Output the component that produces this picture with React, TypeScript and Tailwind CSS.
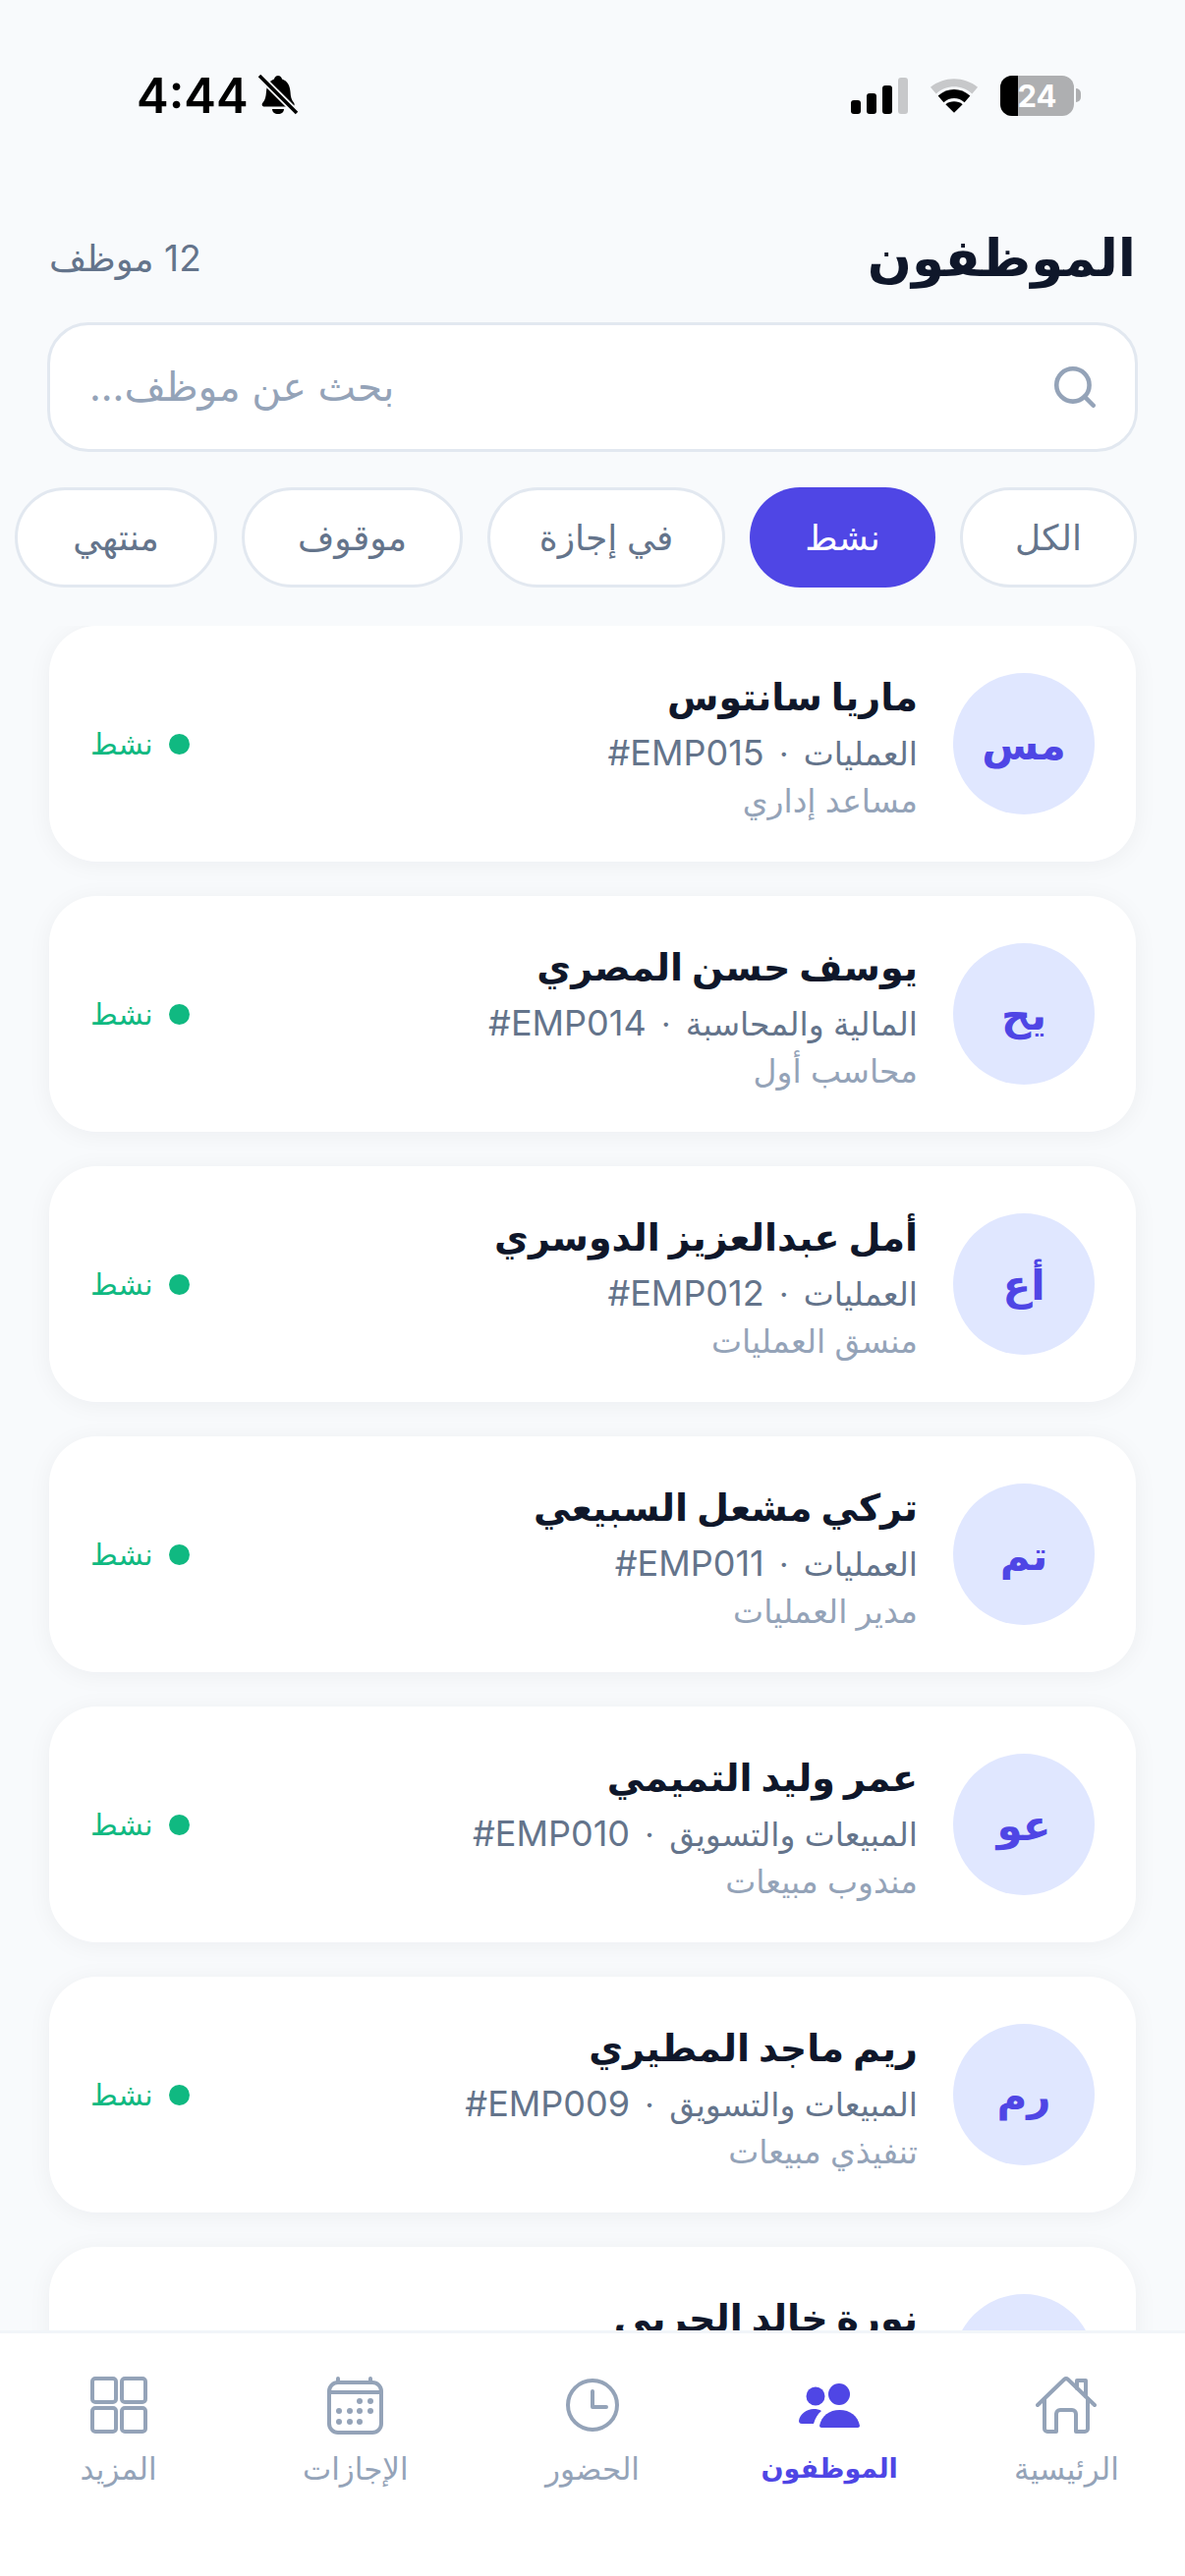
import { Search } from 'lucide-react';

const employees = [
  { initials: 'مس', name: 'ماريا سانتوس', dept: 'العمليات', code: '#EMP015', role: 'مساعد إداري' },
  { initials: 'يح', name: 'يوسف حسن المصري', dept: 'المالية والمحاسبة', code: '#EMP014', role: 'محاسب أول' },
  { initials: 'أع', name: 'أمل عبدالعزيز الدوسري', dept: 'العمليات', code: '#EMP012', role: 'منسق العمليات' },
  { initials: 'تم', name: 'تركي مشعل السبيعي', dept: 'العمليات', code: '#EMP011', role: 'مدير العمليات' },
  { initials: 'عو', name: 'عمر وليد التميمي', dept: 'المبيعات والتسويق', code: '#EMP010', role: 'مندوب مبيعات' },
  { initials: 'رم', name: 'ريم ماجد المطيري', dept: 'المبيعات والتسويق', code: '#EMP009', role: 'تنفيذي مبيعات' },
  { initials: 'نخ', name: 'نورة خالد الحربي', dept: 'الموارد البشرية', code: '#EMP008', role: 'أخصائي موارد بشرية' },
];

const filters = [
  { label: 'الكل', width: 'w-[180px]' },
  { label: 'نشط', width: 'w-[189px]', active: true },
  { label: 'في إجازة', width: 'w-[242px]' },
  { label: 'موقوف', width: 'w-[225px]' },
  { label: 'منتهي', width: 'w-[206px]' },
];

function StatusBar() {
  return (
    <div dir="ltr" className="flex h-[164px] shrink-0 items-center justify-between pl-[139px] pr-[106px] pt-[30px]">
      <div className="flex items-center gap-[9px]">
        <span className="text-[49px] font-semibold leading-none text-black">4:44</span>
        <svg width="42" height="42" viewBox="0 0 42 42">
          <path d="M21 1c2 0 3.500 1.500 4 3.500 6 2 8 7 8.500 13 .3 5 1 8 3.500 11 1 1.500 1 4-1.500 4H7c-2.500 0-3-2.500-1.500-4 2.500-3 3-6 3.500-11C9.500 11.500 11.500 6.500 17 4.500 17.500 2.500 19 1 21 1z" fill="#000" />
          <path d="M15 35h12c0 3-2.500 5-6 5s-6-2-6-5z" fill="#000" />
          <path d="M2 1l38 38" stroke="#f8fafc" strokeWidth="7" />
          <path d="M2 1l38 38" stroke="#000" strokeWidth="3.500" />
        </svg>
      </div>
      <div className="flex items-center gap-[22px]">
        <div className="flex items-end gap-[6px]">
          <div className="h-[14px] w-[10px] rounded-[3px] bg-black" />
          <div className="h-[21px] w-[10px] rounded-[3px] bg-black" />
          <div className="h-[29px] w-[10px] rounded-[3px] bg-black" />
          <div className="h-[37px] w-[10px] rounded-[3px] bg-[#c7c8ca]" />
        </div>
        <svg width="50" height="37" viewBox="0 0 52 38">
          <path d="M1 10C15-2 37-2 51 10l-6 7C34 7 18 7 7 17z" fill="#c7c8ca" />
          <path d="M9 19c10-9 24-9 34 0l-6 7c-6-6-16-6-22 0z" fill="#000" />
          <path d="M17 28c5-4 13-4 18 0l-9 9z" fill="#000" />
        </svg>
        <div className="flex items-center gap-[2px]">
          <div className="relative flex h-[41px] w-[75px] items-center justify-center overflow-hidden rounded-[12px] bg-[#aeafb1]">
            <div className="absolute inset-y-0 left-0 w-[18px] bg-black" />
            <span className="relative text-[31px] font-bold leading-none text-white">24</span>
          </div>
          <div className="h-[14px] w-[5px] rounded-r-full bg-[#aeafb1]" />
        </div>
      </div>
    </div>
  );
}

function EmployeeCard({ employee }: { employee: (typeof employees)[number] }) {
  return (
    <div className="flex h-[240px] shrink-0 items-center gap-[36px] rounded-[48px] bg-white px-[42px] shadow-[0_3px_24px_rgba(15,23,42,0.05)]">
      <div className="flex h-[144px] w-[144px] shrink-0 items-center justify-center rounded-full bg-[#e0e7ff] text-[42px] font-bold text-[#4f46e5]">
        {employee.initials}
      </div>
      <div className="min-w-0 flex-1 pt-[7px]">
        <div className="text-[38px] font-bold leading-[54px] text-[#0f172a]">{employee.name}</div>
        <div className="mt-[6px] text-[33px] leading-[48px] text-[#64748b]">
          {employee.dept}
          <span className="mx-[6px]"> · </span>
          <bdi className="text-[36px]">{employee.code}</bdi>
        </div>
        <div className="text-[33px] leading-[48px] text-[#94a3b8]">{employee.role}</div>
      </div>
      <div className="flex items-center gap-[16px]">
        <div className="h-[21px] w-[21px] rounded-full bg-[#10b981]" />
        <span className="text-[30px] font-medium text-[#10b981]">نشط</span>
      </div>
    </div>
  );
}

function NavIcon({ name }: { name: string }) {
  if (name === 'home') {
    return (
      <svg width="62" height="58" viewBox="0 0 62 58" fill="none" stroke="#94a3b8" strokeWidth="4" strokeLinejoin="round" strokeLinecap="round">
        <path d="M2 29 29 3a3 3 0 0 1 4 0l27 26" />
        <path d="M9 23v30a3 3 0 0 0 3 3h9V38a4 4 0 0 1 4-4h12a4 4 0 0 1 4 4v18h9a3 3 0 0 0 3-3V23" />
        <path d="M42 12V4h9v16" />
      </svg>
    );
  }
  if (name === 'users') {
    return (
      <svg width="62" height="45" viewBox="0 0 62 45" fill="#4f46e5">
        <circle cx="17" cy="13" r="9.500" />
        <circle cx="41" cy="11" r="11" />
        <path d="M0 38c1-7 8-12 15-12 3 0 6 .5 8 2-4 3-6 7-8 13H3c-2 0-3-1-3-3z" />
        <path d="M21 43c2-10 10-16 20.500-16S60 33 62 43c0 1-1 2-2 2H23c-1 0-2-1-2-2z" />
      </svg>
    );
  }
  if (name === 'clock') {
    return (
      <svg width="54" height="54" viewBox="0 0 54 54" fill="none" stroke="#94a3b8" strokeWidth="4" strokeLinecap="round" strokeLinejoin="round">
        <circle cx="27" cy="27" r="25" />
        <path d="M27 13v16h14" />
      </svg>
    );
  }
  if (name === 'calendar') {
    return (
      <svg width="57" height="59" viewBox="0 0 57 59" fill="none" stroke="#94a3b8" strokeWidth="4" strokeLinecap="round">
        <rect x="2" y="6" width="53" height="51" rx="9" />
        <path d="M2 16h53M11 2v4M44 2v4" />
        <g fill="#94a3b8" stroke="none">
          <circle cx="33" cy="25" r="3" /><circle cx="44" cy="25" r="3" />
          <circle cx="12" cy="35" r="3" /><circle cx="23" cy="35" r="3" /><circle cx="33" cy="35" r="3" /><circle cx="44" cy="35" r="3" />
          <circle cx="12" cy="46" r="3" /><circle cx="23" cy="46" r="3" /><circle cx="33" cy="46" r="3" />
        </g>
      </svg>
    );
  }
  return (
    <svg width="58" height="58" viewBox="0 0 58 58" fill="none" stroke="#94a3b8" strokeWidth="4">
      <rect x="2" y="2" width="24" height="24" rx="3" />
      <rect x="32" y="2" width="24" height="24" rx="3" />
      <rect x="2" y="32" width="24" height="24" rx="3" />
      <rect x="32" y="32" width="24" height="24" rx="3" />
    </svg>
  );
}

const navItems = [
  { label: 'الرئيسية', icon: 'home' },
  { label: 'الموظفون', icon: 'users', active: true },
  { label: 'الحضور', icon: 'clock' },
  { label: 'الإجازات', icon: 'calendar' },
  { label: 'المزيد', icon: 'grid' },
];

export default function App() {
  return (
    <div
      dir="rtl"
      className="flex h-[2622px] w-[1206px] flex-col overflow-hidden bg-[#f8fafc]"
      style={{ fontFamily: '"Inter", "DejaVu Sans", sans-serif' }}
    >
      <StatusBar />

      {/* Header */}
      <div className="flex h-[164px] shrink-0 items-center justify-between px-[50px] pt-[34px]">
        <h1 className="text-[53px] font-bold text-[#0f172a]">الموظفون</h1>
        <span className="text-[37px] text-[#64748b]">12 موظف</span>
      </div>

      {/* Search */}
      <div className="mx-[48px] flex h-[132px] shrink-0 items-center justify-between rounded-[42px] border-[3px] border-[#e2e8f0] bg-white pl-[40px] pr-[36px]">
        <Search size={50} color="#94a3b8" strokeWidth={2.2} />
        <span className="text-[41px] text-[#94a3b8]">بحث عن موظف...</span>
      </div>

      {/* Filters */}
      <div className="mt-[36px] flex shrink-0 gap-[25px] pr-[49px]">
        {filters.map((f) => (
          <div
            key={f.label}
            className={`flex h-[102px] shrink-0 items-center justify-center rounded-full text-[36px] ${f.width} ${
              f.active ? 'bg-[#4f46e5] font-medium text-white' : 'border-[3px] border-[#e2e8f0] bg-white font-medium text-[#64748b]'
            }`}
          >
            {f.label}
          </div>
        ))}
      </div>

      {/* List */}
      <div className="mt-[39px] flex min-h-0 flex-1 flex-col gap-[35px] overflow-hidden px-[50px]">
        {employees.map((e) => (
          <EmployeeCard key={e.code} employee={e} />
        ))}
      </div>

      {/* Bottom nav */}
      <div className="flex h-[250px] shrink-0 items-start border-t-[3px] border-[#f1f5f9] bg-white pt-[42px]">
        {navItems.map((item) => (
          <div key={item.label} className="flex flex-1 flex-col items-center">
            <div className="flex h-[62px] items-center justify-center">
              <NavIcon name={item.icon} />
            </div>
            <span className={`mt-[11px] leading-[46px] ${item.active ? 'text-[27px] font-semibold text-[#4f46e5]' : 'text-[31px] font-medium text-[#94a3b8]'}`}>
              {item.label}
            </span>
          </div>
        ))}
      </div>
    </div>
  );
}
